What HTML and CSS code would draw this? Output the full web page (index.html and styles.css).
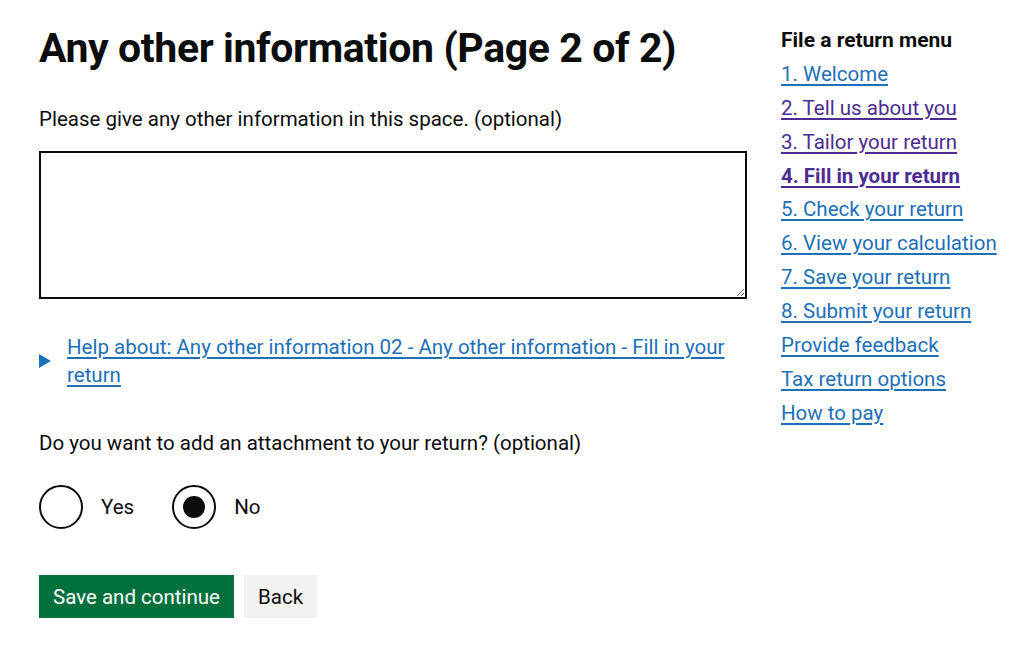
FILE: index.html
```html
<!DOCTYPE html>
<html lang="en">
<head>
<meta charset="utf-8">
<title>Any other information</title>
<link rel="stylesheet" href="styles.css">
</head>
<body>
<div class="page">
  <main class="main">
    <h1 class="heading">Any other information (Page 2 of 2)</h1>
    <label class="label" for="info">Please give any other information in this space. (optional)</label>
    <textarea id="info" class="textarea"></textarea>
    <details class="details">
      <summary class="summary"><span class="summary-text">Help about: Any other information 02 - Any other information - Fill in your return</span></summary>
    </details>
    <p class="question">Do you want to add an attachment to your return? (optional)</p>
    <div class="radios">
      <label class="radio"><span class="radio-circle"></span><span class="radio-label">Yes</span></label>
      <label class="radio"><span class="radio-circle checked"></span><span class="radio-label">No</span></label>
    </div>
    <div class="buttons">
      <button class="btn btn-primary">Save and continue</button>
      <button class="btn btn-secondary">Back</button>
    </div>
  </main>
  <nav class="side">
    <h2 class="side-title">File a return menu</h2>
    <ul class="side-list">
      <li><a href="#" class="link">1. Welcome</a></li>
      <li><a href="#" class="link visited">2. Tell us about you</a></li>
      <li><a href="#" class="link visited">3. Tailor your return</a></li>
      <li><a href="#" class="link visited current">4. Fill in your return</a></li>
      <li><a href="#" class="link">5. Check your return</a></li>
      <li><a href="#" class="link">6. View your calculation</a></li>
      <li><a href="#" class="link">7. Save your return</a></li>
      <li><a href="#" class="link">8. Submit your return</a></li>
      <li><a href="#" class="link">Provide feedback</a></li>
      <li><a href="#" class="link">Tax return options</a></li>
      <li><a href="#" class="link">How to pay</a></li>
    </ul>
  </nav>
</div>
</body>
</html>
```
FILE: styles.css
```css
* { box-sizing: border-box; }
html, body { margin: 0; padding: 0; background: #fff; }
body {
  font-family: Roboto, "Noto Sans", Arial, sans-serif;
  color: #0b0c0c;
  font-size: 20.5px;
  line-height: 28px;
}
.page {
  display: flex;
  gap: 34px;
  padding: 23px 0 0 39px;
}
.main { width: 708px; flex: none; }
.heading {
  margin: 0 0 32px;
  font-size: 41px;
  font-weight: 700;
  line-height: 50px;
  letter-spacing: -0.4px;
}
.label { display: block; margin-bottom: 18px; }
.textarea {
  display: block;
  width: 708px;
  height: 148px;
  border: 2px solid #0b0c0c;
  border-radius: 0;
  margin: 0 0 34px;
  resize: vertical;
  font: inherit;
}
.details { margin-bottom: 40px; }
.summary {
  list-style: none;
  display: flex;
  align-items: center;
  cursor: pointer;
  color: #1d70b8;
  line-height: 28px;
}
.summary::-webkit-details-marker { display: none; }
.summary::before {
  content: "";
  flex: none;
  width: 0; height: 0;
  border-style: solid;
  border-width: 7px 0 7px 12px;
  border-color: transparent transparent transparent #1d70b8;
  margin-right: 16px;
}
.summary-text {
  text-decoration: underline;
  text-decoration-thickness: 2px;
  text-underline-offset: 3px;
}
.question { margin: 0 0 28px; }
.radios { display: flex; gap: 38px; margin-bottom: 46px; }
.radio { display: flex; align-items: center; gap: 18px; }
.radio-circle {
  width: 44px; height: 44px;
  border: 2px solid #0b0c0c;
  border-radius: 50%;
  position: relative;
  flex: none;
}
.radio-circle.checked::after {
  content: "";
  position: absolute;
  left: 9px; top: 9px;
  width: 22px; height: 22px;
  border-radius: 50%;
  background: #0b0c0c;
}
.buttons { display: flex; gap: 10px; }
.btn {
  font: inherit;
  border: 0;
  border-radius: 0;
  padding: 8px 14px 7px;
  line-height: 28px;
  cursor: pointer;
}
.btn-primary { background: #00703c; color: #fff; box-shadow: 0 2px 0 #002d18; }
.btn-secondary { background: #f3f2f1; color: #0b0c0c; box-shadow: 0 2px 0 #929191; }
.side { flex: none; width: 250px; padding-top: 3px; }
.side-title { font-size: 21px; font-weight: 700; margin: 0 0 5.9px; line-height: 28px; }
.side-list { list-style: none; margin: 0; padding: 0; }
.side-list li { line-height: 28px; margin-bottom: 5.9px; }
.link {
  color: #1d70b8;
  text-decoration: underline;
  text-decoration-thickness: 2px;
  text-underline-offset: 3px;
}
.link.visited { color: #4c2c92; }
.link.current { font-weight: 700; }
```
